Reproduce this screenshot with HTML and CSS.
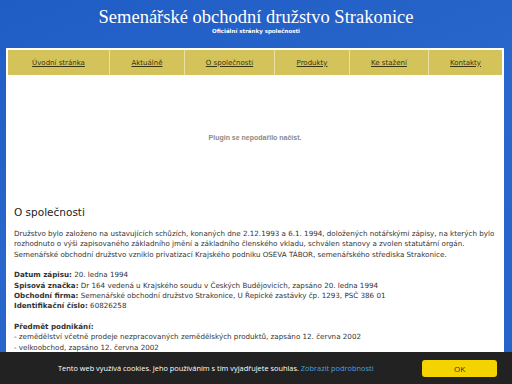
FILE: index.html
```html
<!DOCTYPE html>
<html lang="cs">
<head>
    <meta charset="UTF-8">
    <meta name="viewport" content="width=device-width, initial-scale=1.0">
    <title>Semenářské obchodní družstvo Strakonice</title>
    <link rel="stylesheet" href="styles.css">
</head>
<body>
    <header class="header">
        <h1>Semenářské obchodní družstvo Strakonice</h1>
        <p class="subtitle">Oficiální stránky společnosti</p>
    </header>

    <div class="container">
        <nav class="menu">
            <a href="#">Úvodní stránka</a>
            <a href="#">Aktuálně</a>
            <a href="#">O společnosti</a>
            <a href="#">Produkty</a>
            <a href="#">Ke stažení</a>
            <a href="#">Kontakty</a>
        </nav>

        <div class="plugin">Plugin se nepodařilo načíst.</div>

        <div class="content">
            <h2>O společnosti</h2>
            <p>Družstvo bylo založeno na ustavujících schůzích, konaných dne 2.12.1993 a 6.1. 1994, doložených notářskými zápisy, na kterých bylo rozhodnuto o výši zapisovaného základního jmění a základního členského vkladu, schválen stanovy a zvolen statutární orgán.<br>
            Semenářské obchodní družstvo vzniklo privatizací Krajského podniku OSEVA TÁBOR, semenářského střediska Strakonice.</p>

            <p><b>Datum zápisu:</b> 20. ledna 1994<br>
            <b>Spisová značka:</b> Dr 164 vedená u Krajského soudu v Českých Budějovicích, zapsáno 20. ledna 1994<br>
            <b>Obchodní firma:</b> Semenářské obchodní družstvo Strakonice, U Řepické zastávky čp. 1293, PSČ 386 01<br>
            <b>Identifikační číslo:</b> 60826258</p>

            <p><b>Předmět podnikání:</b><br>
            - zemědělství včetně prodeje nezpracovaných zemědělských produktů, zapsáno 12. června 2002<br>
            - velkoobchod, zapsáno 12. června 2002</p>
        </div>
    </div>

    <div class="cookies">
        <span class="cookies-text">Tento web využívá cookies. Jeho používáním s tím vyjadřujete souhlas. <a href="#">Zobrazit podrobnosti</a></span>
        <button class="cookies-ok">OK</button>
    </div>
</body>
</html>
```

FILE: styles.css
```css
body {
    margin: 0;
    font-family: "DejaVu Sans", Verdana, sans-serif;
    background: linear-gradient(160deg, #1f5cc4 0%, #2a67cc 45%, #2463c9 100%);
    min-height: 100vh;
    overflow: hidden;
}

.header {
    text-align: center;
    color: #fff;
    height: 48px;
}

.header h1 {
    margin: 0;
    padding-top: 7px;
    font-family: "Liberation Serif", "Times New Roman", serif;
    font-weight: normal;
    font-size: 18.5px;
    line-height: 20px;
}

.subtitle {
    margin: 0;
    font-size: 5.5px;
    font-weight: bold;
    line-height: 8px;
}

.container {
    background-color: #fff;
    margin: 0 8px 0 6px;
    padding: 2px;
    min-height: 340px;
}

.menu {
    display: grid;
    grid-template-columns: 101px 74px 89px 74px 78px 73px;
    gap: 1px;
    background-color: #e9e1a6;
    height: 25px;
}

.menu a {
    background-color: #d4c35a;
    color: #3a3510;
    font-size: 7px;
    display: flex;
    align-items: center;
    justify-content: center;
}

.plugin {
    height: 124px;
    display: flex;
    align-items: center;
    justify-content: center;
    font-family: "Liberation Sans", Arial, sans-serif;
    font-size: 7px;
    font-weight: bold;
    color: #8a8a8a;
}

.content {
    padding: 0 0 0 6px;
    color: #333;
    font-size: 7.15px;
    line-height: 10.4px;
}

.content h2 {
    margin: 5px 0 9px;
    font-family: "DejaVu Sans", Verdana, sans-serif;
    font-weight: normal;
    font-size: 10.5px;
    line-height: 16px;
    color: #222;
}

.content p {
    margin: 0 0 10px;
}

.cookies {
    position: fixed;
    left: 0;
    right: 0;
    bottom: 0;
    height: 32px;
    background-color: #222;
    display: flex;
    align-items: center;
    justify-content: space-between;
    padding: 0 15px 0 58px;
}

.cookies-text {
    color: #fff;
    font-family: "Open Sans", sans-serif;
    font-size: 7.4px;
}

.cookies-text a {
    color: #4aa0e0;
    text-decoration: none;
}

.cookies-ok {
    width: 75px;
    height: 17px;
    background-color: #f5d300;
    border: none;
    border-radius: 3px;
    font-family: "Open Sans", sans-serif;
    font-size: 8px;
    color: #333;
}
```
